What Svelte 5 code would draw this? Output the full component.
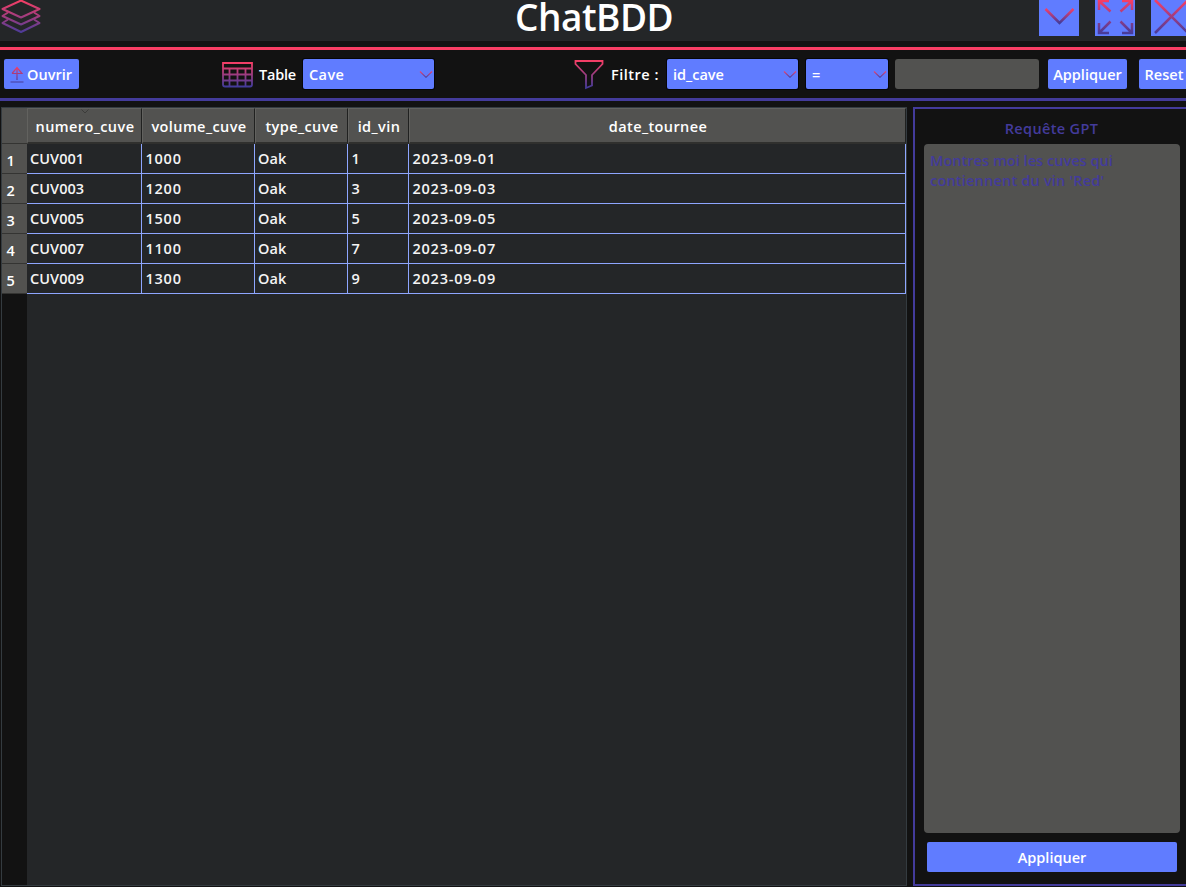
<script>
  const columns = ['numero_cuve', 'volume_cuve', 'type_cuve', 'id_vin', 'date_tournee'];
  const rows = [1, 3, 5, 7, 9].map((n, i) => [
    { v: 'CUV00' + n, kind: 'code' },
    { v: ['1000', '1200', '1500', '1100', '1300'][i], kind: 'digits' },
    { v: 'Oak', kind: 'code' },
    { v: String(n), kind: 'digits' },
    { v: '2023-09-0' + n, kind: 'digits' }
  ]);
</script>

{#snippet chevron()}
  <svg width="14" height="9" viewBox="0 0 14 9"><path d="M1 1.5 7 7.3 13 1.5" fill="none" stroke="url(#fade)" stroke-width="1.1" /></svg>
{/snippet}

<div class="window">
  <svg class="defs" width="0" height="0">
    <defs>
      <linearGradient id="fade" x1="0" y1="0" x2="0" y2="1">
        <stop offset="0" stop-color="#f43e66" /><stop offset="1" stop-color="#433b9b" />
      </linearGradient>
      <linearGradient id="glyph" gradientUnits="userSpaceOnUse" x1="0" y1="0" x2="0" y2="34">
        <stop offset="0" stop-color="#f93e64" /><stop offset="1" stop-color="#433b9b" />
      </linearGradient>
    </defs>
  </svg>
  <header>
    <svg width="42" height="34" viewBox="0 0 42 34">
      <g fill="none" stroke="url(#glyph)" stroke-width="2" stroke-linejoin="round">
        <path d="M21 .5 39.5 9 21 17.5 2.5 9Z" />
        <path d="M8 12.5 2.5 16 21 24.5 39.5 16 34 12.5" />
        <path d="M8 19.5 2.5 23 21 32 39.5 23 34 19.5" />
      </g>
    </svg>
    <h1>ChatBDD</h1>
    <div class="controls">
      <button aria-label="Réduire"><svg width="40" height="36" viewBox="0 0 40 36"><path d="M6.500 9 20.500 23 34.500 9" fill="none" stroke="url(#fade)" stroke-width="2.5" /></svg></button>
      <button aria-label="Agrandir"><svg width="40" height="36" viewBox="0 0 40 36"><path d="M15.5 11.5 4 1M4 10V1H14M25.5 11.5 37 1M27 1H37V10M15.5 21.5 4 33M4 23V33H14M25.5 21.5 37 33M27 33H37V23" fill="none" stroke="url(#glyph)" stroke-width="2.5" /></svg></button>
      <button aria-label="Fermer"><svg width="40" height="36" viewBox="0 0 40 36"><path d="M4 0 37 33M37 0 4 33" fill="none" stroke="url(#glyph)" stroke-width="2.6" /></svg></button>
    </div>
  </header>
  <div class="toolbar">
    <button class="btn open">
      <svg width="14" height="17" viewBox="0 0 14 17"><path d="M7 14V1M2 7.5 7 1.5 12 7.5H2M.5 16H13.5" fill="none" stroke="url(#fade)" stroke-width="1.2" /></svg>
      <span>Ouvrir</span>
    </button>
    <div class="group table-group">
      <svg width="32" height="28" viewBox="0 -2 32 28"><path d="M1 1H30V22.5Q30 24.5 28 24.5H3Q1 24.5 1 22.5ZM1 6.5H30M1 12.5H30M1 18.5H30M7.5 6.5V24.5M15.5 6.5V24.5M23.5 6.5V24.5" fill="none" stroke="url(#fade)" stroke-width="1.8" /></svg>
      <span class="label">Table</span>
      <div class="select wide"><span class="cave">Cave</span>{@render chevron()}</div>
    </div>
    <div class="group filter-group">
      <svg width="30" height="31" viewBox="0 -.5 30 31"><path d="M1.5 1.5H28.5V4.5L18 15.5V26L12 28.5V15.5L1.5 4.5Z" fill="none" stroke="url(#fade)" stroke-width="1.8" /></svg>
      <span class="label">Filtre :</span>
      <div class="select wide"><span>id_cave</span>{@render chevron()}</div>
      <div class="select op"><span>=</span>{@render chevron()}</div>
      <div class="field"></div>
      <button class="btn apply"><span>Appliquer</span></button>
      <button class="btn reset"><span>Reset</span></button>
    </div>
  </div>
  <main>
    <div class="grid">
      <div class="row head">
        <div class="corner"></div>
        {#each columns as name, i}
          <div class="th">
            {#if i === 0}<svg class="sort" width="8" height="5" viewBox="0 0 8 5"><path d="M.5.5 4 4 7.5.5" fill="none" stroke="#3c3c3a" /></svg>{/if}
            <span>{name}</span>
          </div>
        {/each}
      </div>
      {#each rows as r, i}
        <div class="row">
          <div class="num"><span>{i + 1}</span></div>
          {#each r as cell}<div class="td {cell.kind}"><span>{cell.v}</span></div>{/each}
        </div>
      {/each}
      <div class="rest"><div class="gutter"></div></div>
    </div>
    <aside>
      <h2><span>Requête GPT</span></h2>
      <div class="prompt"><span>Montres moi les cuves qui</span><br /><span class="second">contiennent du vin 'Red'</span></div>
      <button class="btn send"><span>Appliquer</span></button>
    </aside>
  </main>
</div>

<style>
  :global(body) { margin: 0; background: #121212; overflow: hidden; }
  * { box-sizing: border-box; }
  .window { width: 1186px; height: 887px; overflow: hidden; background: #121212; color: #fff; font: 600 14.5px/20px "Open Sans", "Noto Sans", sans-serif; display: flex; flex-direction: column; }
  .defs { position: absolute; }
  svg { display: block; flex: none; }
  button { border: 0; padding: 0; margin: 0; font: inherit; color: inherit; }
  header { height: 41px; flex: none; background: #242628; display: grid; grid-template-columns: 515px 1fr 147px; }
  h1 { margin: 0; font-size: 37px; line-height: 33px; font-weight: 650; letter-spacing: -.5px; white-space: nowrap; }
  .controls { display: flex; gap: 16px; }
  .controls button { width: 40px; height: 36px; flex: none; background: #607cff; }
  .toolbar { margin-top: 6px; height: 54px; flex: none; border-top: 3px solid #f93e64; border-bottom: 3px solid #433b9b; display: flex; align-items: center; padding-left: 4px; }
  .btn { height: 30px; flex: none; background: #607cff; border-radius: 2px; display: flex; align-items: center; justify-content: center; white-space: nowrap; }
  .btn span, .select span, .label { padding-top: 2px; }
  .open { width: 75px; gap: 3px; padding-right: 1px; }
  .group { display: flex; align-items: center; flex: none; }
  .table-group { margin-left: 143px; }
  .filter-group { margin-left: 140px; }
  .label { width: 44px; margin-left: 5px; white-space: nowrap; letter-spacing: -.2px; }
  .filter-group .label { width: 56px; margin-left: 7px; letter-spacing: .5px; }
  .select { height: 30px; background: #607cff; border-radius: 2px; box-shadow: 0 0 0 1px #060608; display: flex; align-items: center; justify-content: space-between; padding: 0 1px 0 6px; }
  .cave { letter-spacing: .4px; }
  .wide { width: 131px; }
  .op { width: 82px; margin-left: 8px; }
  .field { width: 144px; height: 30px; margin-left: 7px; border-radius: 3px; background: #525250; }
  .apply { width: 79px; margin-left: 9px; }
  .reset { width: 50px; margin-left: 12px; }
  main { flex: 1; display: flex; gap: 6px; padding: 6px 0 1px 1px; min-height: 0; }
  .grid { width: 906px; flex: none; border: 1px solid #343b40; background: #242628; display: flex; flex-direction: column; }
  .row { display: grid; grid-template-columns: 25px 115px 113px 93px 61px 497px; height: 30px; flex: none; }
  .head { height: 36px; letter-spacing: .4px; }
  .corner { background: #525250; border-bottom: 1px solid #343432; }
  .th { position: relative; display: flex; align-items: center; justify-content: center; padding: 2px 0 0 1px; background: #525250; border: solid; border-width: 1px 1px 2px; border-color: #62625f #202120 #30302e #62625f; }
  .sort { position: absolute; top: 0; left: 53px; }
  .num { background: #525250; border-bottom: 1px solid #343432; padding: 7px 0 0 4.5px; }
  .td { border-right: 1px solid #8ea6ff; border-bottom: 1px solid #8ea6ff; padding: 5px 0 0 3px; white-space: nowrap; color: #f4f4f4; }
  .code { letter-spacing: .05px; }
  .digits { letter-spacing: .8px; padding-left: 3.4px; }
  .rest { flex: 1; display: flex; }
  .gutter { width: 25px; background: #121212; }
  aside { width: 276px; flex: none; border: 2px solid #433b9b; display: flex; flex-direction: column; padding: 10px 0 12px 9px; color: #433b9b; }
  h2 { margin: 0 0 5px; width: 255px; font: inherit; text-align: center; letter-spacing: .35px; }
  .prompt { width: 256px; flex: 1; border-radius: 4px; background: #525250; padding: 7px 6px; white-space: nowrap; letter-spacing: .04px; }
  .second { letter-spacing: .2px; }
  .send { width: 250px; margin: 9px 0 0 3px; color: #fff; letter-spacing: 0; }
</style>
